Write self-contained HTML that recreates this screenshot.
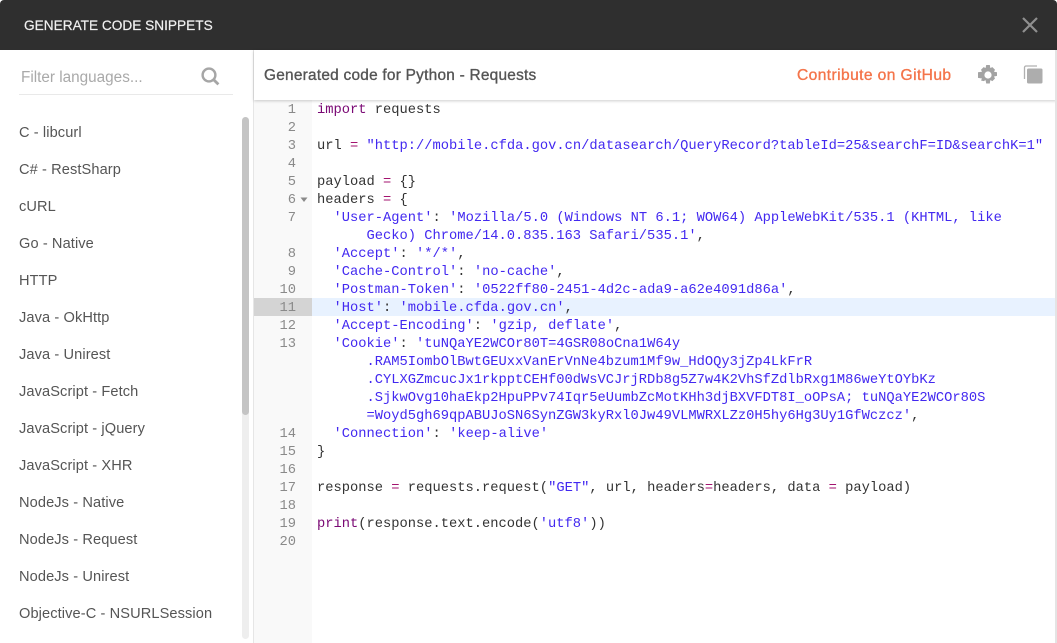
<!DOCTYPE html>
<html><head><meta charset="utf-8">
<style>
html,body{margin:0;padding:0;background:#fff;width:1057px;height:643px;overflow:hidden}
.a{position:absolute}
#root{position:relative;width:1057px;height:643px;overflow:hidden;background:#fff;font-family:"Liberation Sans",sans-serif}
.it{position:absolute;left:19px;font-size:14.6px;letter-spacing:.1px;color:#555;line-height:20px;white-space:pre}
.n{position:absolute;width:42px;left:254px;text-align:right;font:13.75px/18px "Liberation Mono",monospace;color:#8a8a8a}
.l{position:absolute;left:317px;font:13.75px/18px "Liberation Mono",monospace;color:#333;white-space:pre}
.k{color:#7a0874}.o{color:#a3136f}.s{color:#4228f0}.b{color:#7a0874}
</style></head><body><div id="root">
<div class="a" style="left:0;top:0;width:1057px;height:50px;background:#2f2f2f;border-radius:4px 4px 0 0"></div>
<div class="a" style="left:24px;top:15px;font-size:13.66px;line-height:22px;color:#f0f0f0;white-space:pre;-webkit-text-stroke:.2px #f0f0f0">GENERATE CODE SNIPPETS</div>
<svg class="a" style="left:1021px;top:16px" width="18" height="18" viewBox="0 0 18 18"><path d="M2 2L16 16M16 2L2 16" stroke="#8f8f8f" stroke-width="2.2" fill="none"/></svg>

<div class="a" style="left:21px;top:67px;font-size:15.3px;line-height:22px;color:#a9a9a9;white-space:pre">Filter languages...</div>
<div class="a" style="left:19px;top:94px;width:214px;height:1px;background:#e9e9e9"></div>
<svg class="a" style="left:200px;top:66px" width="20" height="20" viewBox="0 0 20 20"><circle cx="9" cy="9" r="6.4" fill="none" stroke="#a6a6a6" stroke-width="2.4"/><path d="M13.6 13.6L18.4 18.4" stroke="#a6a6a6" stroke-width="2.8"/></svg>

<div class="it" style="top:123px">C - libcurl</div>
<div class="it" style="top:160px">C# - RestSharp</div>
<div class="it" style="top:197px">cURL</div>
<div class="it" style="top:234px">Go - Native</div>
<div class="it" style="top:271px">HTTP</div>
<div class="it" style="top:308px">Java - OkHttp</div>
<div class="it" style="top:345px">Java - Unirest</div>
<div class="it" style="top:382px">JavaScript - Fetch</div>
<div class="it" style="top:419px">JavaScript - jQuery</div>
<div class="it" style="top:456px">JavaScript - XHR</div>
<div class="it" style="top:493px">NodeJs - Native</div>
<div class="it" style="top:530px">NodeJs - Request</div>
<div class="it" style="top:567px">NodeJs - Unirest</div>
<div class="it" style="top:604px">Objective-C - NSURLSession</div>

<div class="a" style="left:242px;top:117px;width:7px;height:522px;background:#eeeeee;border-radius:4px"></div>
<div class="a" style="left:242px;top:117px;width:7px;height:298px;background:#c4c4c4;border-radius:4px"></div>
<div class="a" style="left:253px;top:50px;width:1px;height:593px;background:#e6e6e6"></div>

<div class="a" style="left:254px;top:100px;width:58px;height:543px;background:#f9f9f9"></div>
<div class="a" style="left:254px;top:50px;width:803px;height:50px;background:#fff;box-shadow:0 1px 3px rgba(0,0,0,.2)"></div>
<div class="a" style="left:264px;top:65px;font-size:15.4px;letter-spacing:.25px;line-height:22px;color:#555;white-space:pre;-webkit-text-stroke:.35px #555">Generated code for Python - Requests</div>
<div class="a" style="left:797px;top:65px;font-size:15.6px;letter-spacing:.4px;line-height:22px;color:#f4744a;white-space:pre;-webkit-text-stroke:.35px #f4744a">Contribute on GitHub</div>
<svg class="a" style="left:978px;top:65px" width="20" height="20" viewBox="0 0 20 20"><path fill="#a3a3a3" d="M8.200 0h3.600l.5 3 2.100-.9 2.600 2.600-1 2.100 3 .5v3.600l-3 .6 1 2-2.600 2.600-2.100-1-.5 3.400H8.200l-.6-3.400-2 1L3 15.500l1-2-4-.6V7.300l4-.5-1-2.100L5.600 2.100l2 .9z"/><circle cx="10" cy="10" r="3.600" fill="#fff"/></svg>
<svg class="a" style="left:1023px;top:65px" width="20" height="19" viewBox="0 0 20 19"><path d="M1.500 14V2.500A1.500 1.500 0 0 1 3 1h11" fill="none" stroke="#b0b0b0" stroke-width="1.300"/><rect x="4" y="3.500" width="15.500" height="15" rx="1.500" fill="#adadad"/></svg>

<div class="a" style="left:312px;top:298px;width:745px;height:18px;background:#e8f2ff"></div>
<div class="a" style="left:254px;top:298px;width:58px;height:18px;background:#d4d4d4"></div>
<svg class="a" style="left:300px;top:197px" width="8" height="6" viewBox="0 0 8 6"><path d="M0.500 0.500H7.500L4 5z" fill="#8a8a8a"/></svg>

<div class="n" style="top:102px">1</div><div class="n" style="top:120px">2</div><div class="n" style="top:138px">3</div><div class="n" style="top:156px">4</div><div class="n" style="top:174px">5</div><div class="n" style="top:192px">6</div><div class="n" style="top:210px">7</div><div class="n" style="top:246px">8</div><div class="n" style="top:264px">9</div><div class="n" style="top:282px">10</div><div class="n" style="top:300px">11</div><div class="n" style="top:318px">12</div><div class="n" style="top:336px">13</div><div class="n" style="top:426px">14</div><div class="n" style="top:444px">15</div><div class="n" style="top:462px">16</div><div class="n" style="top:480px">17</div><div class="n" style="top:498px">18</div><div class="n" style="top:516px">19</div><div class="n" style="top:534px">20</div>

<div class="l" style="top:102px"><span class="k">import</span> requests</div>
<div class="l" style="top:138px">url <span class="o">=</span> <span class="s">"http://mobile.cfda.gov.cn/datasearch/QueryRecord?tableId=25&amp;searchF=ID&amp;searchK=1"</span></div>
<div class="l" style="top:174px">payload <span class="o">=</span> {}</div>
<div class="l" style="top:192px">headers <span class="o">=</span> {</div>
<div class="l" style="top:210px">  <span class="s">'User-Agent'</span>: <span class="s">'Mozilla/5.0 (Windows NT 6.1; WOW64) AppleWebKit/535.1 (KHTML, like</span></div>
<div class="l" style="top:228px">      <span class="s">Gecko) Chrome/14.0.835.163 Safari/535.1'</span>,</div>
<div class="l" style="top:246px">  <span class="s">'Accept'</span>: <span class="s">'*/*'</span>,</div>
<div class="l" style="top:264px">  <span class="s">'Cache-Control'</span>: <span class="s">'no-cache'</span>,</div>
<div class="l" style="top:282px">  <span class="s">'Postman-Token'</span>: <span class="s">'0522ff80-2451-4d2c-ada9-a62e4091d86a'</span>,</div>
<div class="l" style="top:300px">  <span class="s">'Host'</span>: <span class="s">'mobile.cfda.gov.cn'</span>,</div>
<div class="l" style="top:318px">  <span class="s">'Accept-Encoding'</span>: <span class="s">'gzip, deflate'</span>,</div>
<div class="l" style="top:336px">  <span class="s">'Cookie'</span>: <span class="s">'tuNQaYE2WCOr80T=4GSR08oCna1W64y</span></div>
<div class="l" style="top:354px">      <span class="s">.RAM5IombOlBwtGEUxxVanErVnNe4bzum1Mf9w_HdOQy3jZp4LkFrR</span></div>
<div class="l" style="top:372px">      <span class="s">.CYLXGZmcucJx1rkpptCEHf00dWsVCJrjRDb8g5Z7w4K2VhSfZdlbRxg1M86weYtOYbKz</span></div>
<div class="l" style="top:390px">      <span class="s">.SjkwOvg10haEkp2HpuPPv74Iqr5eUumbZcMotKHh3djBXVFDT8I_oOPsA; tuNQaYE2WCOr80S</span></div>
<div class="l" style="top:408px">      <span class="s">=Woyd5gh69qpABUJoSN6SynZGW3kyRxl0Jw49VLMWRXLZz0H5hy6Hg3Uy1GfWczcz'</span>,</div>
<div class="l" style="top:426px">  <span class="s">'Connection'</span>: <span class="s">'keep-alive'</span></div>
<div class="l" style="top:444px">}</div>
<div class="l" style="top:480px">response <span class="o">=</span> requests.request(<span class="s">"GET"</span>, url, headers<span class="o">=</span>headers, data <span class="o">=</span> payload)</div>
<div class="l" style="top:516px"><span class="b">print</span>(response.text.encode(<span class="s">'utf8'</span>))</div>

<div class="a" style="left:1055px;top:50px;width:2px;height:593px;background:#e4e4e4"></div>
</div></body></html>
